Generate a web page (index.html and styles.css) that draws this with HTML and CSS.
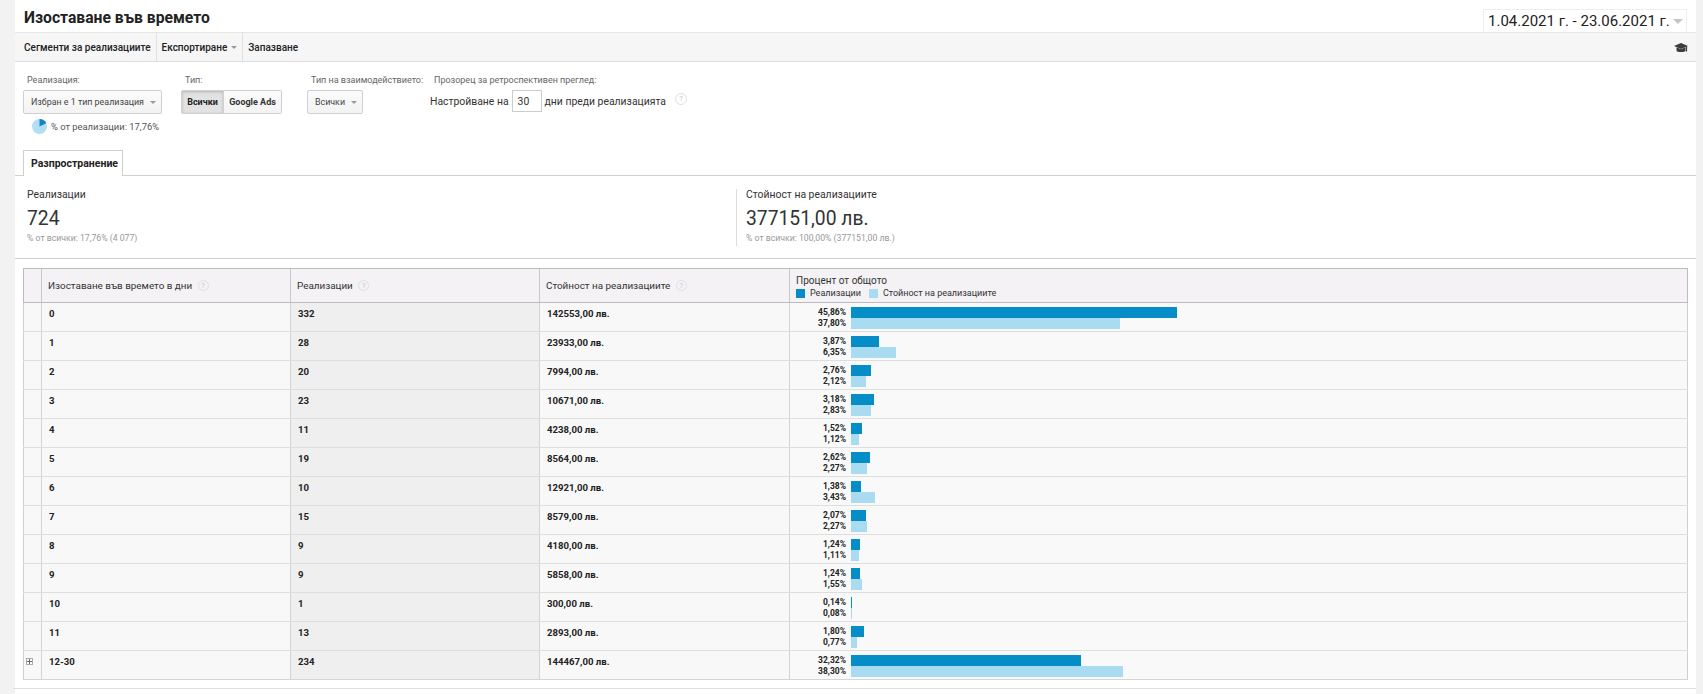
FILE: index.html
```html
<!DOCTYPE html>
<html lang="bg">
<head>
<meta charset="utf-8">
<title>Изоставане във времето</title>
<link rel="stylesheet" href="styles.css">
</head>
<body>
<div class="page">
  <header class="title-bar">
    <h1 class="title">Изоставане във времето</h1>
    <div class="date-picker"><span>1.04.2021 г. - 23.06.2021 г.</span><span class="caret caret-lg"></span></div>
  </header>

  <nav class="toolbar">
    <div class="tool">Сегменти за реализациите</div>
    <div class="tool">Експортиране <span class="caret"></span></div>
    <div class="tool">Запазване</div>
    <div class="toolbar-spacer"></div>
    <svg class="cap-icon" width="16" height="12" viewBox="0 0 15 12">
      <path d="M0.5 4 L7.5 1 L14.5 4 L7.5 7 Z" fill="#3c3c3c"/>
      <path d="M3 5.3 V8.6 C3 10.6 12 10.6 12 8.6 V5.3 L7.5 7.3 Z" fill="#3c3c3c"/>
      <path d="M13 4.4 V9.5" stroke="#3c3c3c" stroke-width="1.2"/>
    </svg>
  </nav>

  <section class="controls">
    <div class="control">
      <div class="control-label">Реализация:</div>
      <div class="dropdown">Избран е 1 тип реализация <span class="caret"></span></div>
      <div class="pie-line">
        <svg width="15" height="15" viewBox="0 0 15 15">
          <circle cx="7.5" cy="7.5" r="7.5" fill="#b3ddf2"/>
          <path d="M7.5 7.5 L7.5 0 A7.5 7.5 0 0 1 14.24 4.2 Z" fill="#1683c3"/>
        </svg>
        <span>% от реализации: 17,76%</span>
      </div>
    </div>
    <div class="control">
      <div class="control-label">Тип:</div>
      <div class="toggle">
        <span class="toggle-btn selected">Всички</span><span class="toggle-btn">Google Ads</span>
      </div>
    </div>
    <div class="control">
      <div class="control-label">Тип на взаимодействието:</div>
      <div class="dropdown">Всички <span class="caret"></span></div>
    </div>
    <div class="control control-window">
      <div class="control-label">Прозорец за ретроспективен преглед:</div>
      <div class="window-line">
        <span>Настройване на</span>
        <span class="days-input">30</span>
        <span>дни преди реализацията</span>
        <span class="help help-lg">?</span>
      </div>
    </div>
  </section>

  <div class="tabs">
    <div class="tab">Разпространение</div>
  </div>

  <section class="scorecards">
    <div class="scorecard first">
      <div class="sc-label">Реализации</div>
      <div class="sc-value">724</div>
      <div class="sc-sub">% от всички: 17,76% (4 077)</div>
    </div>
    <div class="scorecard second">
      <div class="sc-label">Стойност на реализациите</div>
      <div class="sc-value">377151,00 лв.</div>
      <div class="sc-sub">% от всички: 100,00% (377151,00 лв.)</div>
    </div>
  </section>

  <div class="table-wrap">
    <table class="data">
      <colgroup>
        <col class="c0"><col class="c1"><col class="c2"><col class="c3"><col class="c4">
      </colgroup>
      <thead>
        <tr>
          <th class="cb"></th>
          <th>Изоставане във времето в дни <span class="help">?</span></th>
          <th>Реализации <span class="help">?</span></th>
          <th>Стойност на реализациите <span class="help">?</span></th>
          <th class="pct-head">
            <div>Процент от общото</div>
            <div class="legend"><span class="sw dark"></span>Реализации<span class="sw light"></span>Стойност на реализациите</div>
          </th>
        </tr>
      </thead>
      <tbody>
        <tr><td class="cb"></td><td>0</td><td class="sorted">332</td><td>142553,00 лв.</td><td class="pct"><div class="pct-cell"><div class="pct-labels"><span>45,86%</span><span>37,80%</span></div><div class="bars"><span class="bar dark" style="width:326px"></span><span class="bar light" style="width:269px"></span></div></div></td></tr>
        <tr><td class="cb"></td><td>1</td><td class="sorted">28</td><td>23933,00 лв.</td><td class="pct"><div class="pct-cell"><div class="pct-labels"><span>3,87%</span><span>6,35%</span></div><div class="bars"><span class="bar dark" style="width:27.5px"></span><span class="bar light" style="width:45px"></span></div></div></td></tr>
        <tr><td class="cb"></td><td>2</td><td class="sorted">20</td><td>7994,00 лв.</td><td class="pct"><div class="pct-cell"><div class="pct-labels"><span>2,76%</span><span>2,12%</span></div><div class="bars"><span class="bar dark" style="width:19.6px"></span><span class="bar light" style="width:15px"></span></div></div></td></tr>
        <tr><td class="cb"></td><td>3</td><td class="sorted">23</td><td>10671,00 лв.</td><td class="pct"><div class="pct-cell"><div class="pct-labels"><span>3,18%</span><span>2,83%</span></div><div class="bars"><span class="bar dark" style="width:22.6px"></span><span class="bar light" style="width:20px"></span></div></div></td></tr>
        <tr><td class="cb"></td><td>4</td><td class="sorted">11</td><td>4238,00 лв.</td><td class="pct"><div class="pct-cell"><div class="pct-labels"><span>1,52%</span><span>1,12%</span></div><div class="bars"><span class="bar dark" style="width:10.8px"></span><span class="bar light" style="width:8px"></span></div></div></td></tr>
        <tr><td class="cb"></td><td>5</td><td class="sorted">19</td><td>8564,00 лв.</td><td class="pct"><div class="pct-cell"><div class="pct-labels"><span>2,62%</span><span>2,27%</span></div><div class="bars"><span class="bar dark" style="width:18.6px"></span><span class="bar light" style="width:16px"></span></div></div></td></tr>
        <tr><td class="cb"></td><td>6</td><td class="sorted">10</td><td>12921,00 лв.</td><td class="pct"><div class="pct-cell"><div class="pct-labels"><span>1,38%</span><span>3,43%</span></div><div class="bars"><span class="bar dark" style="width:9.8px"></span><span class="bar light" style="width:24.4px"></span></div></div></td></tr>
        <tr><td class="cb"></td><td>7</td><td class="sorted">15</td><td>8579,00 лв.</td><td class="pct"><div class="pct-cell"><div class="pct-labels"><span>2,07%</span><span>2,27%</span></div><div class="bars"><span class="bar dark" style="width:14.7px"></span><span class="bar light" style="width:16px"></span></div></div></td></tr>
        <tr><td class="cb"></td><td>8</td><td class="sorted">9</td><td>4180,00 лв.</td><td class="pct"><div class="pct-cell"><div class="pct-labels"><span>1,24%</span><span>1,11%</span></div><div class="bars"><span class="bar dark" style="width:8.8px"></span><span class="bar light" style="width:7.9px"></span></div></div></td></tr>
        <tr><td class="cb"></td><td>9</td><td class="sorted">9</td><td>5858,00 лв.</td><td class="pct"><div class="pct-cell"><div class="pct-labels"><span>1,24%</span><span>1,55%</span></div><div class="bars"><span class="bar dark" style="width:8.8px"></span><span class="bar light" style="width:11px"></span></div></div></td></tr>
        <tr><td class="cb"></td><td>10</td><td class="sorted">1</td><td>300,00 лв.</td><td class="pct"><div class="pct-cell"><div class="pct-labels"><span>0,14%</span><span>0,08%</span></div><div class="bars"><span class="bar dark" style="width:1px"></span><span class="bar light" style="width:1px"></span></div></div></td></tr>
        <tr><td class="cb"></td><td>11</td><td class="sorted">13</td><td>2893,00 лв.</td><td class="pct"><div class="pct-cell"><div class="pct-labels"><span>1,80%</span><span>0,77%</span></div><div class="bars"><span class="bar dark" style="width:12.8px"></span><span class="bar light" style="width:5.5px"></span></div></div></td></tr>
        <tr class="last"><td class="cb"><span class="expand"></span></td><td>12-30</td><td class="sorted">234</td><td>144467,00 лв.</td><td class="pct"><div class="pct-cell"><div class="pct-labels"><span>32,32%</span><span>38,30%</span></div><div class="bars"><span class="bar dark" style="width:229.8px"></span><span class="bar light" style="width:272.3px"></span></div></div></td></tr>
      </tbody>
    </table>
  </div>
  <div class="bottom-rule"></div>
</div>
</body>
</html>
```

FILE: styles.css
```css
* { box-sizing: border-box; }
html, body { margin: 0; padding: 0; }
body {
  background: #f2f2f3;
  font-family: Roboto, "Noto Sans", Arial, sans-serif;
  color: #333;
  height: 694px;
  overflow: hidden;
}
.page {
  margin-left: 15px;
  width: 1681px;
  background: #fff;
  height: 694px;
}

/* title bar */
.title-bar {
  height: 33px;
  display: flex;
  align-items: flex-start;
  justify-content: space-between;
  padding: 0 9px 0 9px;
  border-bottom: 1px solid #e6e6e6;
}
.title {
  margin: 7px 0 0 0;
  font-size: 15.7px;
  font-weight: bold;
  color: #222;
  line-height: 22px;
}
.date-picker {
  margin-top: 9px;
  height: 23px;
  width: 204px;
  display: flex;
  align-items: center;
  justify-content: space-between;
  padding: 0 5px 0 4px;
  border: 1px solid #eee;
  border-bottom: none;
  font-size: 15px;
  color: #222;
  background: #fff;
  white-space: nowrap;
}
.caret {
  display: inline-block;
  width: 0; height: 0;
  border-left: 3px solid transparent;
  border-right: 3px solid transparent;
  border-top: 3px solid #999;
  vertical-align: middle;
  margin-left: 3px;
}
.caret-lg {
  border-left-width: 5px;
  border-right-width: 5px;
  border-top-width: 5px;
  border-top-color: #c4c4c4;
}

/* toolbar */
.toolbar {
  height: 29px;
  background: #f6f6f6;
  border-bottom: 1px solid #dedede;
  display: flex;
  align-items: stretch;
}
.tool {
  display: flex;
  align-items: center;
  padding: 0 5px;
  font-size: 10px;
  font-weight: 500;
  color: #222;
  border-right: 1px solid #e0e0e0;
  white-space: nowrap;
}
.tool:first-child { padding-left: 9px; }
.tool:nth-child(3) { border-right: none; }
.tool .caret { margin-left: 4px; }
.toolbar-spacer { flex: 1; }
.cap-icon { align-self: center; margin-right: 7px; margin-top: 1px; }

/* controls */
.controls {
  display: flex;
  align-items: flex-start;
  padding: 13px 8px 0 8px;
  height: 89px;
}
.control { display: flex; flex-direction: column; }
.control:nth-child(1) { width: 158px; }
.control:nth-child(2) { width: 126px; }
.control:nth-child(3) { width: 123px; }
.control-label {
  font-size: 9px;
  color: #666;
  line-height: 11px;
  padding-left: 4px;
  margin-bottom: 4px;
  white-space: nowrap;
}
.dropdown {
  align-self: flex-start;
  height: 24px;
  display: flex;
  align-items: center;
  padding: 0 5px 0 7px;
  border: 1px solid #d0d0d0;
  border-radius: 2px;
  background: linear-gradient(#fbfbfb, #f3f3f3);
  font-size: 8.9px;
  color: #444;
  white-space: nowrap;
}
.dropdown .caret { margin-left: 6px; }
.pie-line {
  display: flex;
  align-items: center;
  gap: 4px;
  margin-top: 5px;
  padding-left: 9px;
  font-size: 9.4px;
  color: #555;
  white-space: nowrap;
}
.toggle { display: flex; align-self: flex-start; }
.toggle-btn {
  height: 24px;
  display: flex;
  align-items: center;
  justify-content: center;
  padding: 0;
  font-size: 9px;
  font-weight: bold;
  color: #333;
  border: 1px solid #d0d0d0;
  background: linear-gradient(#fbfbfb, #f3f3f3);
  white-space: nowrap;
}
.toggle-btn:first-child { border-radius: 2px 0 0 2px; width: 43px; }
.toggle-btn:last-child { border-radius: 0 2px 2px 0; border-left: none; width: 58px; }
.toggle-btn.selected {
  background: #e2e2e2;
  box-shadow: inset 0 1px 3px rgba(0,0,0,0.2);
  color: #222;
}
.window-line {
  display: flex;
  align-items: center;
  gap: 3px;
  font-size: 10.4px;
  color: #333;
  white-space: nowrap;
}
.days-input {
  width: 30px;
  height: 22px;
  border: 1px solid #ccc;
  display: flex;
  align-items: center;
  padding-left: 5px;
  font-size: 10.4px;
}
.help {
  display: inline-flex;
  align-items: center;
  justify-content: center;
  width: 11px; height: 11px;
  border-radius: 50%;
  border: 1px solid #e0e0e0;
  color: #c8c8c8;
  font-size: 7.5px;
  font-weight: normal;
  vertical-align: middle;
  margin-left: 3px;
  line-height: 1;
}
.help-lg { margin-left: 6px; margin-top: -5px; width: 12px; height: 12px; }

/* tabs */
.tabs {
  padding-left: 8px;
  border-bottom: 1px solid #cfcfcf;
  height: 25px;
  display: flex;
  align-items: flex-end;
}
.tab {
  width: 100px;
  height: 26px;
  border: 1px solid #cfcfcf;
  border-bottom: none;
  background: #fff;
  margin-bottom: -1px;
  padding: 0 0 0 7px;
  display: flex;
  align-items: center;
  font-size: 10.5px;
  font-weight: bold;
  color: #222;
}

/* scorecards */
.scorecards {
  display: flex;
  height: 83px;
  border-bottom: 1px solid #d0d0d0;
  padding-top: 12px;
}
.scorecard.first { width: 721px; padding-left: 12px; }
.scorecard.second {
  border-left: 1px solid #dcdcdc;
  padding-left: 9px;
  height: 57px;
  margin-top: 1px;
}
.sc-label { font-size: 10.4px; color: #333; line-height: 14px; }
.scorecard.second .sc-label { margin-top: -1px; }
.sc-value { font-size: 19.3px; color: #333; line-height: 24px; margin-top: 5px; font-weight: 400; }
.sc-sub { font-size: 8.7px; color: #999; line-height: 12px; margin-top: 1px; }

/* table */
.table-wrap { padding: 9px 9px 0 8px; }
.data {
  width: 1664px;
  table-layout: fixed;
  border-collapse: collapse;
}
.c0 { width: 18px; }
.c1 { width: 249px; }
.c2 { width: 249px; }
.c3 { width: 250px; }
.c4 { width: 898px; }
.data th {
  background: #f4f2f5;
  height: 34px;
  border-top: 1px solid #bdbbc0;
  border-bottom: 1px solid #bdbbc0;
  border-left: 1px solid #c8c6ca;
  text-align: left;
  font-weight: normal;
  font-size: 9.9px;
  color: #333;
  padding: 0 6px;
  vertical-align: middle;
}
.data th:first-child { border-left: 1px solid #bdbbc0; }
.data th:last-child { border-right: 1px solid #bdbbc0; }
.data th.pct-head { padding: 5px 6px 0 6px; vertical-align: top; line-height: 13px; font-size: 10px; }
.legend { display: flex; align-items: center; font-size: 9px; color: #333; }
.sw { display: inline-block; width: 9px; height: 9px; margin-right: 5px; }
.sw.dark { background: #058dc7; }
.sw.light { background: #aadcf1; margin-left: 8px; }
.data td {
  background: #f8f8f8;
  border-bottom: 1px solid #dedede;
  border-left: 1px solid #d3d3d3;
  height: 29px;
  padding: 4px 7px 0 7px;
  vertical-align: top;
  font-weight: bold;
  font-size: 9.6px;
  color: #222;
  line-height: 14px;
}
.data td:first-child { border-left: 1px solid #cfcfcf; }
.data td:last-child { border-right: 1px solid #cfcfcf; }
.data td.sorted { background: #efefef; }
.data td.pct { padding: 4px 0 0 0; background: #f9f9f9; }
.data tr.last td { border-bottom: 1px solid #d5d5d5; }
.pct-cell { display: flex; align-items: flex-start; }
.pct-labels {
  width: 56px;
  display: flex;
  flex-direction: column;
  align-items: flex-end;
  font-size: 8.5px;
  font-weight: bold;
  color: #222;
  line-height: 11px;
  margin-right: 5px;
}
.bars { display: flex; flex-direction: column; }
.bar { display: block; height: 11px; }
.bar.dark { background: #058dc7; }
.bar.light { background: #aadcf1; }
.data td.cb { padding: 7px 0 0 2px; }
.expand {
  display: block;
  width: 7px; height: 7px;
  border: 1px solid #aaa;
  background:
    linear-gradient(#666, #666) center / 5px 1px no-repeat,
    linear-gradient(#666, #666) center / 1px 5px no-repeat,
    #fff;
}
.bottom-rule {
  margin-top: 8px;
  border-top: 1px solid #dedede;
  margin-left: -2px;
}
```
